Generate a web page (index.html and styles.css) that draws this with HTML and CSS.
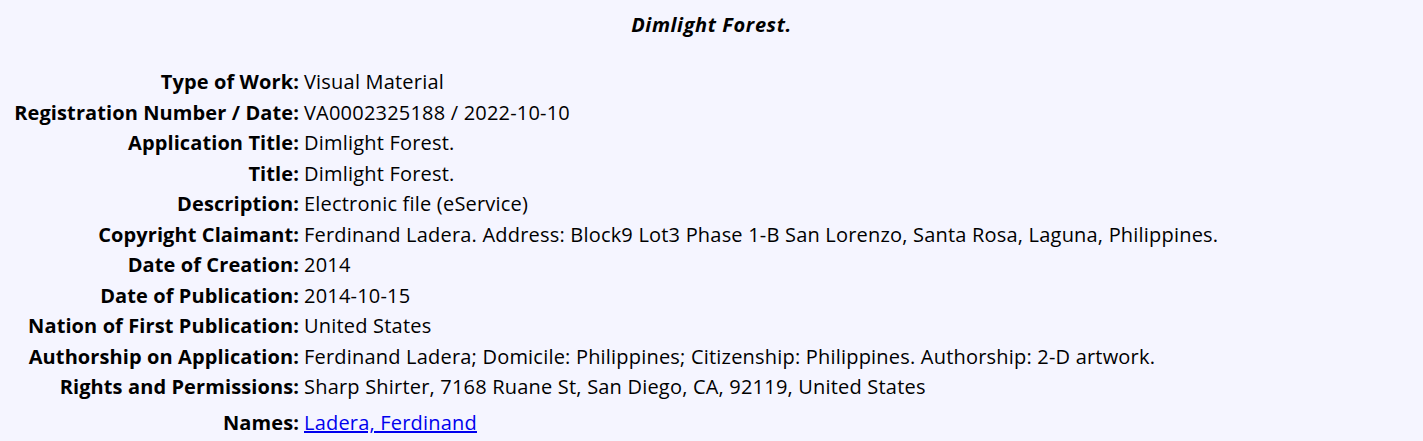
FILE: index.html
```html
<!DOCTYPE html>
<html>
<head>
<meta charset="utf-8">
<link rel="stylesheet" href="styles.css">
</head>
<body>
<h1 class="title">Dimlight Forest.</h1>
<div class="record">
  <div class="label">Type of Work:</div><div class="value">Visual Material</div>
  <div class="label">Registration Number / Date:</div><div class="value">VA0002325188 / 2022-10-10</div>
  <div class="label">Application Title:</div><div class="value">Dimlight Forest.</div>
  <div class="label">Title:</div><div class="value">Dimlight Forest.</div>
  <div class="label">Description:</div><div class="value">Electronic file (eService)</div>
  <div class="label">Copyright Claimant:</div><div class="value">Ferdinand Ladera. Address: Block9 Lot3 Phase 1-B San Lorenzo, Santa Rosa, Laguna, Philippines.</div>
  <div class="label">Date of Creation:</div><div class="value">2014</div>
  <div class="label">Date of Publication:</div><div class="value">2014-10-15</div>
  <div class="label">Nation of First Publication:</div><div class="value">United States</div>
  <div class="label">Authorship on Application:</div><div class="value">Ferdinand Ladera; Domicile: Philippines; Citizenship: Philippines. Authorship: 2-D artwork.</div>
  <div class="label">Rights and Permissions:</div><div class="value">Sharp Shirter, 7168 Ruane St, San Diego, CA, 92119, United States</div>
  <div class="label names-label">Names:</div><div class="value names-value"><a href="#">Ladera, Ferdinand</a></div>
</div>
</body>
</html>
```
FILE: styles.css
```css
html, body {
  background: #f5f5ff;
}
body {
  margin: 8px;
  font-family: "Open Sans", "Noto Sans", sans-serif;
  font-size: 20px;
  color: #000;
}
.title {
  margin: 0;
  padding-top: 4px;
  height: 55px;
  text-align: center;
  font-size: 20px;
  letter-spacing: 0.6px;
  font-style: italic;
  font-weight: bold;
  line-height: 26px;
}
.record {
  display: grid;
  grid-template-columns: 291px auto;
  column-gap: 5px;
  justify-content: start;
  line-height: 30.5px;
}
.label {
  text-align: right;
  font-weight: bold;
  letter-spacing: 0.1px;
}
.value {
  letter-spacing: 0.2px;
}
.names-label, .names-value {
  padding-top: 5px;
}
.value a {
  color: #0000ee;
}
```
